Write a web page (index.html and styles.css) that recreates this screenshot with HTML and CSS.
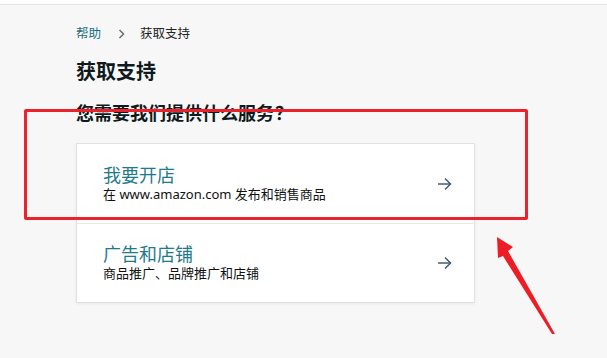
FILE: index.html
```html
<!DOCTYPE html>
<html lang="zh-CN">
<head>
<meta charset="utf-8">
<title>获取支持</title>
<link rel="stylesheet" href="styles.css">
</head>
<body>
<div class="topbar"></div>
<main class="page">
  <nav class="crumbs">
    <a class="crumb-link" href="#">帮助</a>
    <svg class="crumb-sep" width="7" height="10" viewBox="0 0 7 10"><polyline points="1.5,1 5.5,5 1.5,9" fill="none" stroke="#666" stroke-width="1.4"/></svg>
    <span class="crumb-current">获取支持</span>
  </nav>
  <h1 class="title">获取支持</h1>
  <h2 class="subtitle">您需要我们提供什么服务<span class="qmark">？</span></h2>
  <div class="options">
    <a class="option" href="#">
      <div class="option-text">
        <div class="option-title">我要开店</div>
        <div class="option-desc">在 www.amazon.com 发布和销售商品</div>
      </div>
      <svg class="option-arrow" width="15" height="14" viewBox="0 0 15 14"><line x1="1" y1="7" x2="14" y2="7" stroke="#3f5f6e" stroke-width="1.5"/><polyline points="8,1.5 13.5,7 8,12.5" fill="none" stroke="#3f5f6e" stroke-width="1.5"/></svg>
    </a>
    <a class="option" href="#">
      <div class="option-text">
        <div class="option-title">广告和店铺</div>
        <div class="option-desc">商品推广、品牌推广和店铺</div>
      </div>
      <svg class="option-arrow" width="15" height="14" viewBox="0 0 15 14"><line x1="1" y1="7" x2="14" y2="7" stroke="#3f5f6e" stroke-width="1.5"/><polyline points="8,1.5 13.5,7 8,12.5" fill="none" stroke="#3f5f6e" stroke-width="1.5"/></svg>
    </a>
  </div>
</main>
<div class="mark-box"></div>
<svg class="mark-arrow" width="70" height="110" viewBox="0 0 70 110"><polygon points="7,7 23,17 18,21 65,104 62,104 13,26 8,28" fill="#ee1c24"/></svg>
</body>
</html>
```

FILE: styles.css
```css
html, body {
  margin: 0;
  padding: 0;
}
body {
  background: #f7f7f7;
  font-family: "Noto Sans", "Noto Sans CJK SC", sans-serif;
  color: #0f1111;
  width: 607px;
  height: 358px;
  overflow: hidden;
  position: relative;
}
.topbar {
  height: 4px;
  background: #ffffff;
  border-bottom: 1px solid #e4e4e4;
}
.page {
  padding-left: 76px;
  display: flex;
  flex-direction: column;
}
.crumbs {
  margin-top: 21px;
  height: 16px;
  display: flex;
  align-items: center;
  font-size: 12.5px;
  line-height: 16px;
}
.crumb-link {
  color: #1b6f80;
  text-decoration: none;
}
.crumb-sep {
  margin: 0 15px 0 17px;
}
.crumb-current {
  color: #222;
}
.title {
  margin: 18px 0 0;
  font-size: 20px;
  line-height: 24px;
  font-weight: 700;
  color: #0f1a20;
}
.subtitle {
  margin: 17px 0 0;
  font-size: 18px;
  line-height: 22px;
  font-weight: 700;
  color: #0f1a20;
}
.qmark {
  font-family: "Noto Sans CJK TC", "Noto Sans CJK SC", sans-serif;
  margin-left: 1px;
}
.options {
  margin-top: 19px;
  width: 397px;
  background: #ffffff;
  border: 1px solid #dfe2e2;
  box-shadow: 0 1px 3px rgba(0,0,0,0.06);
  display: flex;
  flex-direction: column;
}
.option {
  height: 79px;
  box-sizing: border-box;
  padding: 0 22px 0 26px;
  display: flex;
  align-items: center;
  justify-content: space-between;
  text-decoration: none;
}
.option + .option {
  border-top: 1px solid #e7e9e9;
}
.option-text {
  display: flex;
  flex-direction: column;
  margin-top: -2px;
}
.option-title {
  font-size: 18px;
  line-height: 22px;
  color: #1f7a8a;
  font-weight: 400;
}
.option-desc {
  font-size: 13px;
  line-height: 16px;
  color: #0f1111;
}
.option-arrow {
  display: block;
}
.mark-box {
  position: absolute;
  left: 24px;
  top: 109px;
  width: 498px;
  height: 105px;
  border: 3px solid #e9222b;
  border-radius: 2px;
}
.mark-arrow {
  position: absolute;
  left: 490px;
  top: 230px;
}
```
